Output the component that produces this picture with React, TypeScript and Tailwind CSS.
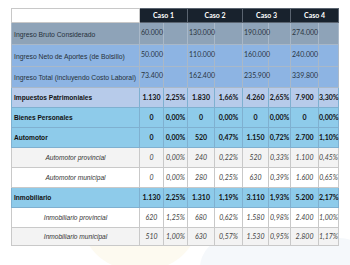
import React from 'react';

type Sub = { v: string; p: string };

const cols = [128, 24, 24, 27, 28, 26, 22, 28, 20];

const top = [
  { label: 'Ingreso Bruto Considerado', bg: 'bg-[#8ea3b8]', h: 'h-[22px]', vals: ['60.000', '130.000', '190.000', '274.000'] },
  { label: 'Ingreso Neto de Aportes (de Bolsillo)', bg: 'bg-[#8db4e3]', h: 'h-[22px]', vals: ['50.000', '110.000', '160.000', '240.000'] },
  { label: 'Ingreso Total (incluyendo Costo Laboral)', bg: 'bg-[#8db4e3]', h: 'h-[21px]', vals: ['73.400', '162.400', '235.900', '339.800'] },
];

type Row = { label: string; kind: 'main' | 'sub'; bg: string; h: string; cells: Sub[] };

const rows: Row[] = [
  {
    label: 'Impuestos Patrimoniales', kind: 'main', bg: 'bg-[#b7cbea]', h: 'h-[20px]',
    cells: [{ v: '1.130', p: '2,25%' }, { v: '1.830', p: '1,66%' }, { v: '4.260', p: '2,65%' }, { v: '7.900', p: '3,30%' }],
  },
  {
    label: 'Bienes Personales', kind: 'main', bg: 'bg-[#8ecbea]', h: 'h-[20px]',
    cells: [{ v: '0', p: '0,00%' }, { v: '0', p: '0,00%' }, { v: '0', p: '0,00%' }, { v: '0', p: '0,00%' }],
  },
  {
    label: 'Automotor', kind: 'main', bg: 'bg-[#8ecbea]', h: 'h-[20px]',
    cells: [{ v: '0', p: '0,00%' }, { v: '520', p: '0,47%' }, { v: '1.150', p: '0,72%' }, { v: '2.700', p: '1,10%' }],
  },
  {
    label: 'Automotor provincial', kind: 'sub', bg: 'bg-[#f3f3f3]', h: 'h-[20px]',
    cells: [{ v: '0', p: '0,00%' }, { v: '240', p: '0,22%' }, { v: '520', p: '0,33%' }, { v: '1.100', p: '0,45%' }],
  },
  {
    label: 'Automotor municipal', kind: 'sub', bg: 'bg-white', h: 'h-[20px]',
    cells: [{ v: '0', p: '0,00%' }, { v: '280', p: '0,25%' }, { v: '630', p: '0,39%' }, { v: '1.600', p: '0,65%' }],
  },
  {
    label: 'Inmobiliario', kind: 'main', bg: 'bg-[#8ecbea]', h: 'h-[20px]',
    cells: [{ v: '1.130', p: '2,25%' }, { v: '1.310', p: '1,19%' }, { v: '3.110', p: '1,93%' }, { v: '5.200', p: '2,17%' }],
  },
  {
    label: 'Inmobiliario provincial', kind: 'sub', bg: 'bg-white', h: 'h-[20px]',
    cells: [{ v: '620', p: '1,25%' }, { v: '680', p: '0,62%' }, { v: '1.580', p: '0,98%' }, { v: '2.400', p: '1,00%' }],
  },
  {
    label: 'Inmobiliario municipal', kind: 'sub', bg: 'bg-[#f3f3f3]', h: 'h-[18px]',
    cells: [{ v: '510', p: '1,00%' }, { v: '630', p: '0,57%' }, { v: '1.530', p: '0,95%' }, { v: '2.800', p: '1,17%' }],
  },
];

const label = "font-['Liberation_Sans',Arial,sans-serif]";
const num = "font-['Lato','Open_Sans',sans-serif]";

export default function App() {
  return (
    <div className="w-[350px] h-[265px] bg-white overflow-hidden relative">
      {/* faint watermark behind the table */}
      <div className="absolute left-[80px] top-[160px] w-[120px] h-[110px] rounded-full bg-[#fdfaf0]" />
      <div className="absolute left-[200px] top-[238px] w-[170px] h-[60px] rounded-full bg-[#f5f8fb]" />
      <div className="relative pl-[11px] pt-[8px]">
        <table className="border-collapse table-fixed text-[#1a1a1a] w-[327px]">
          <colgroup>
            {cols.map((w, i) => (
              <col key={i} style={{ width: w }} />
            ))}
          </colgroup>
          <thead>
            <tr className="h-[14px]">
              <th className="bg-white border border-[#c8c8c8] p-0" />
              {['Caso 1', 'Caso 2', 'Caso 3', 'Caso 4'].map((c) => (
                <th
                  key={c}
                  colSpan={2}
                  className={`bg-[#18222d] text-white text-[7px] font-bold border border-[#5a6470] p-0 leading-none ${num}`}
                >
                  {c}
                </th>
              ))}
            </tr>
          </thead>
          <tbody>
            {top.map((r) => (
              <tr key={r.label} className={`${r.h} ${r.bg}`}>
                <td className={`border border-[#a9b8c8] px-[2px] pb-[4px] align-bottom text-[6.8px] text-[#26303a] whitespace-nowrap overflow-hidden ${label}`}>
                  {r.label}
                </td>
                {r.vals.map((v) => (
                  <React.Fragment key={v}>
                    <td className={`border border-[#a9b8c8] pl-[1px] pb-[3px] text-[7px] text-[#2b3642] whitespace-nowrap overflow-visible ${num}`}>
                      {v}
                    </td>
                    <td className="border border-[#a9b8c8] p-0" />
                  </React.Fragment>
                ))}
              </tr>
            ))}
            {rows.map((r) => {
              const main = r.kind === 'main';
              const bd = main ? 'border-[#7fb0d0]' : 'border-[#c9c9c9]';
              const tone = main ? 'font-bold text-[#111]' : 'italic text-[#444]';
              return (
                <tr key={r.label} className={`${r.h} ${r.bg}`}>
                  <td
                    className={`border ${bd} p-0 text-[6.6px] whitespace-nowrap ${label} ${
                      main ? 'font-bold text-left pl-[2px] text-[#111]' : 'italic text-center text-[#333]'
                    }`}
                  >
                    {r.label}
                  </td>
                  {r.cells.map((c, i) => (
                    <React.Fragment key={i}>
                      <td className={`border ${bd} p-0 text-center text-[7px] whitespace-nowrap ${num} ${tone}`}>
                        {c.v}
                      </td>
                      <td className={`border ${bd} p-0 text-center text-[7px] whitespace-nowrap ${num} ${tone}`}>
                        {c.p}
                      </td>
                    </React.Fragment>
                  ))}
                </tr>
              );
            })}
          </tbody>
        </table>
      </div>
    </div>
  );
}
